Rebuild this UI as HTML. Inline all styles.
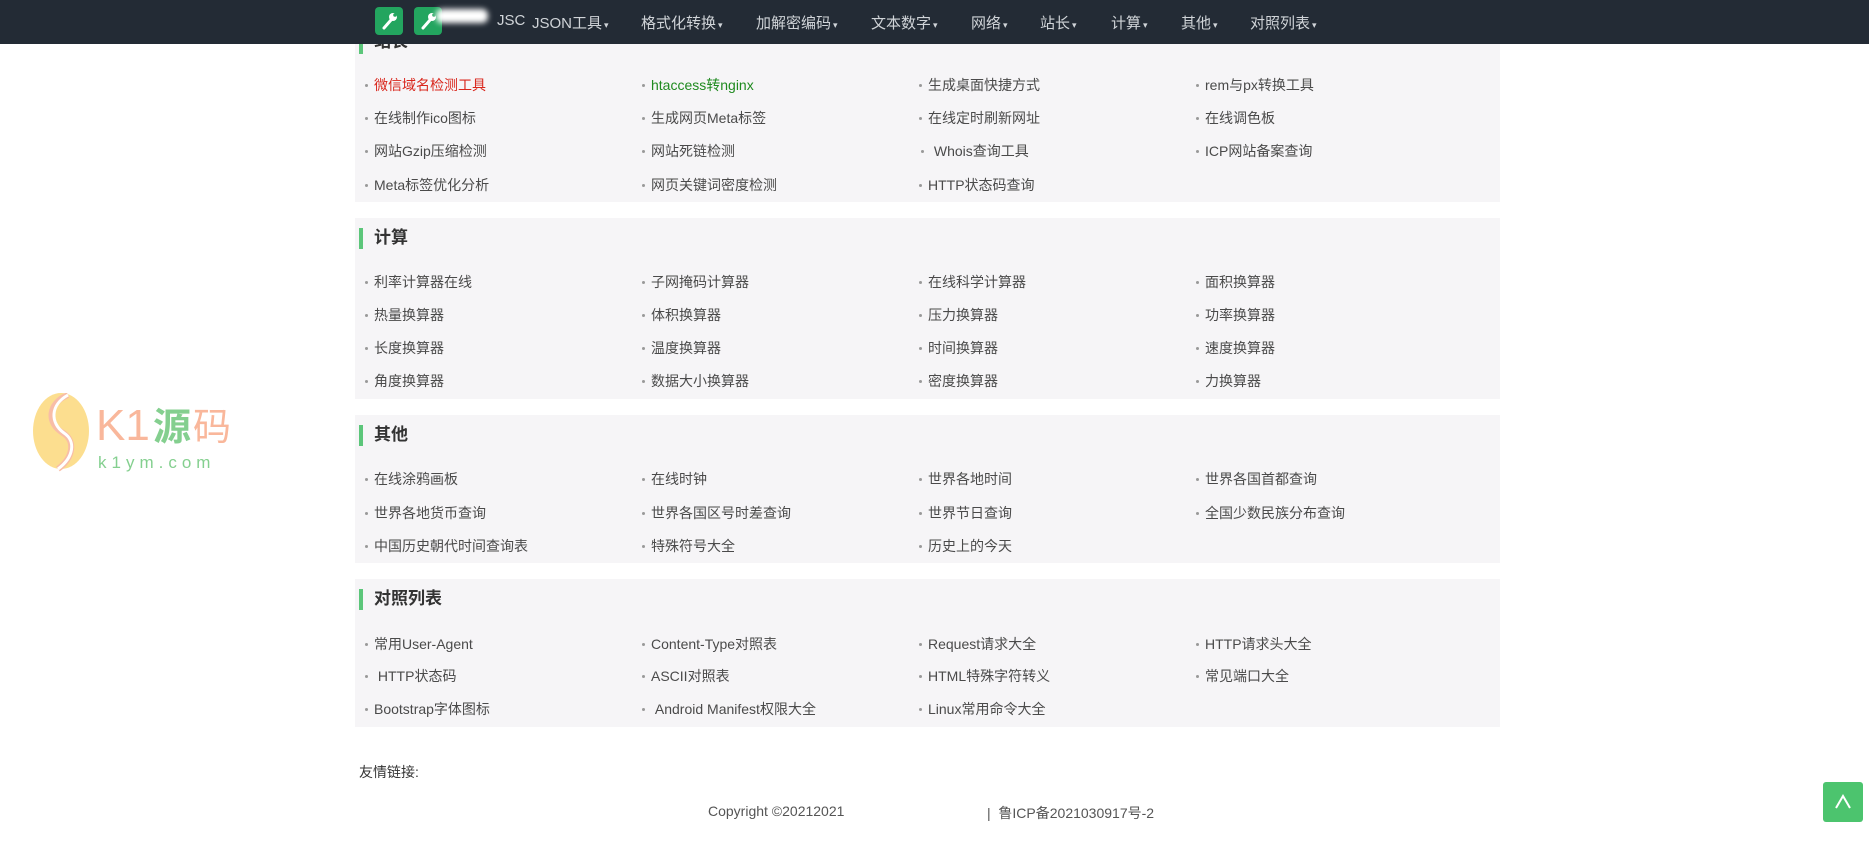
<!DOCTYPE html>
<html><head><meta charset="utf-8">
<style>
*{margin:0;padding:0;box-sizing:border-box}
body{width:1869px;height:868px;position:relative;overflow:hidden;background:#fff;font-family:"Liberation Sans","Noto Sans CJK SC",sans-serif;color:#444}
.nav{position:absolute;left:0;top:0;width:1869px;height:44px;background:#232b35;z-index:5}
.nav span{position:absolute;top:12px;font-size:15px;color:#d0d4d8;white-space:nowrap}
.nav span i{font-style:normal;font-size:9px;margin-left:2px}
.ico{position:absolute;top:7px;width:28px;height:28px;background:#23a55f;border-radius:4px}
.sec{position:absolute;left:355px;width:1145px;background:#f6f5f7}
.t{position:absolute;left:374px;font-size:17px;font-weight:bold;color:#333;line-height:22px}
.bar{position:absolute;left:359px;width:4px;height:21px;background:#5cc67a}
.it{position:absolute;font-size:14px;line-height:18px;white-space:nowrap;color:#4a4a4a}
.it:before{content:"";position:absolute;left:-9px;top:8px;width:3px;height:3px;border-radius:50%;background:#999}
</style></head><body>
<div class="nav">
<div class="ico" style="left:375px"><svg width="28" height="28" viewBox="0 0 28 28"><path d="M9 21 L16 13" stroke="#fff" stroke-width="3" stroke-linecap="round"/><circle cx="18" cy="10" r="4" fill="#fff"/><circle cx="20" cy="8" r="1.8" fill="#23a55f"/></svg></div>
<div class="ico" style="left:414px"><svg width="28" height="28" viewBox="0 0 28 28"><path d="M9 21 L16 13" stroke="#fff" stroke-width="3" stroke-linecap="round"/><circle cx="18" cy="10" r="4" fill="#fff"/><circle cx="20" cy="8" r="1.8" fill="#23a55f"/></svg></div>
<div style="position:absolute;left:436px;top:9px;width:52px;height:14px;background:#fff;border-radius:6px;filter:blur(3px)"></div>
<span style="left:497px">JSC</span>
<span style="left:532px">JSON工具<i>▾</i></span>
<span style="left:641px">格式化转换<i>▾</i></span>
<span style="left:756px">加解密编码<i>▾</i></span>
<span style="left:871px">文本数字<i>▾</i></span>
<span style="left:971px">网络<i>▾</i></span>
<span style="left:1040px">站长<i>▾</i></span>
<span style="left:1111px">计算<i>▾</i></span>
<span style="left:1181px">其他<i>▾</i></span>
<span style="left:1250px">对照列表<i>▾</i></span>
</div>

<div class="sec" style="top:20px;height:182px"></div>
<div class="bar" style="top:33px"></div><div class="t" style="top:31px">站长</div>
<div class="it" style="left:374px;top:76px;color:#d9261c">微信域名检测工具</div>
<div class="it" style="left:651px;top:76px;color:#1f8a1f">htaccess转nginx</div>
<div class="it" style="left:928px;top:76px">生成桌面快捷方式</div>
<div class="it" style="left:1205px;top:76px">rem与px转换工具</div>
<div class="it" style="left:374px;top:109px">在线制作ico图标</div>
<div class="it" style="left:651px;top:109px">生成网页Meta标签</div>
<div class="it" style="left:928px;top:109px">在线定时刷新网址</div>
<div class="it" style="left:1205px;top:109px">在线调色板</div>
<div class="it" style="left:374px;top:142px">网站Gzip压缩检测</div>
<div class="it" style="left:651px;top:142px">网站死链检测</div>
<div class="it" style="left:930px;top:142px">&nbsp;Whois查询工具</div>
<div class="it" style="left:1205px;top:142px">ICP网站备案查询</div>
<div class="it" style="left:374px;top:176px">Meta标签优化分析</div>
<div class="it" style="left:651px;top:176px">网页关键词密度检测</div>
<div class="it" style="left:928px;top:176px">HTTP状态码查询</div>

<div class="sec" style="top:218px;height:181px"></div>
<div class="bar" style="top:228px"></div><div class="t" style="top:227px">计算</div>
<div class="it" style="left:374px;top:273px">利率计算器在线</div>
<div class="it" style="left:651px;top:273px">子网掩码计算器</div>
<div class="it" style="left:928px;top:273px">在线科学计算器</div>
<div class="it" style="left:1205px;top:273px">面积换算器</div>
<div class="it" style="left:374px;top:306px">热量换算器</div>
<div class="it" style="left:651px;top:306px">体积换算器</div>
<div class="it" style="left:928px;top:306px">压力换算器</div>
<div class="it" style="left:1205px;top:306px">功率换算器</div>
<div class="it" style="left:374px;top:339px">长度换算器</div>
<div class="it" style="left:651px;top:339px">温度换算器</div>
<div class="it" style="left:928px;top:339px">时间换算器</div>
<div class="it" style="left:1205px;top:339px">速度换算器</div>
<div class="it" style="left:374px;top:372px">角度换算器</div>
<div class="it" style="left:651px;top:372px">数据大小换算器</div>
<div class="it" style="left:928px;top:372px">密度换算器</div>
<div class="it" style="left:1205px;top:372px">力换算器</div>

<div class="sec" style="top:415px;height:148px"></div>
<div class="bar" style="top:425px"></div><div class="t" style="top:424px">其他</div>
<div class="it" style="left:374px;top:470px">在线涂鸦画板</div>
<div class="it" style="left:651px;top:470px">在线时钟</div>
<div class="it" style="left:928px;top:470px">世界各地时间</div>
<div class="it" style="left:1205px;top:470px">世界各国首都查询</div>
<div class="it" style="left:374px;top:504px">世界各地货币查询</div>
<div class="it" style="left:651px;top:504px">世界各国区号时差查询</div>
<div class="it" style="left:928px;top:504px">世界节日查询</div>
<div class="it" style="left:1205px;top:504px">全国少数民族分布查询</div>
<div class="it" style="left:374px;top:537px">中国历史朝代时间查询表</div>
<div class="it" style="left:651px;top:537px">特殊符号大全</div>
<div class="it" style="left:928px;top:537px">历史上的今天</div>

<div class="sec" style="top:579px;height:148px"></div>
<div class="bar" style="top:589px"></div><div class="t" style="top:588px">对照列表</div>
<div class="it" style="left:374px;top:635px">常用User-Agent</div>
<div class="it" style="left:651px;top:635px">Content-Type对照表</div>
<div class="it" style="left:928px;top:635px">Request请求大全</div>
<div class="it" style="left:1205px;top:635px">HTTP请求头大全</div>
<div class="it" style="left:374px;top:667px">&nbsp;HTTP状态码</div>
<div class="it" style="left:651px;top:667px">ASCII对照表</div>
<div class="it" style="left:928px;top:667px">HTML特殊字符转义</div>
<div class="it" style="left:1205px;top:667px">常见端口大全</div>
<div class="it" style="left:374px;top:700px">Bootstrap字体图标</div>
<div class="it" style="left:651px;top:700px">&nbsp;Android Manifest权限大全</div>
<div class="it" style="left:928px;top:700px">Linux常用命令大全</div>

<div style="position:absolute;left:359px;top:762px;font-size:14px;color:#333">友情链接:</div>
<div style="position:absolute;left:708px;top:803px;font-size:14px;color:#555">Copyright ©20212021</div>
<div style="position:absolute;left:987px;top:803px;font-size:14px;color:#555">|&nbsp; 鲁ICP备2021030917号-2</div>

<div style="position:absolute;left:1823px;top:782px;width:40px;height:40px;background:#4cc46e;border-radius:3px">
<svg width="40" height="40" viewBox="0 0 40 40"><path d="M13 26 L20 14 L27 26" stroke="#fff" stroke-width="2" fill="none"/></svg></div>

<div style="position:absolute;left:28px;top:393px;opacity:.75">
<svg width="210" height="80" viewBox="0 0 210 80">
<ellipse cx="33" cy="38" rx="28" ry="38" fill="#fbd46a"/>
<path d="M40 2 C20 10 18 30 35 40 C48 48 45 65 30 76" stroke="#f6a88a" stroke-width="6" fill="none"/>
<path d="M40 2 C22 12 22 30 36 40 C48 48 46 64 30 76" stroke="#fff" stroke-width="3" fill="none"/>
<text x="68" y="47" font-size="44" fill="#f8a07a" font-family="Liberation Sans, sans-serif">K1</text>
<text x="125" y="47" font-size="38" fill="#5cc06a" font-family="Noto Sans CJK SC, sans-serif" font-weight="bold">源</text>
<text x="165" y="47" font-size="38" fill="#f8a07a" font-family="Noto Sans CJK SC, sans-serif">码</text>
<text x="70" y="75" font-size="17" fill="#5cc06a" letter-spacing="5" font-family="Liberation Sans, sans-serif">k1ym.com</text>
</svg></div>
</body></html>
